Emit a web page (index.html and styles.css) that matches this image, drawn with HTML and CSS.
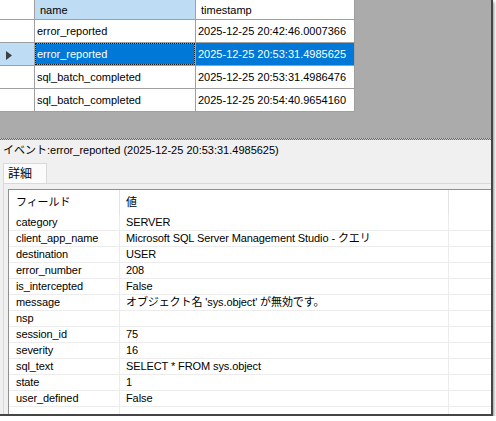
FILE: index.html
```html
<!DOCTYPE html>
<html lang="ja">
<head>
<meta charset="utf-8">
<title>Event viewer</title>
<link rel="stylesheet" href="styles.css">
</head>
<body>
<div class="frame">
  <div class="top">
    <div class="events">
      <div class="c corner"></div>
      <div class="c hd hd-sel">name</div>
      <div class="c hd">timestamp</div>

      <div class="c rh"></div>
      <div class="c">error_reported</div>
      <div class="c">2025-12-25 20:42:46.0007366</div>

      <div class="c rh rh-cur"><svg class="arrow" width="6" height="9" viewBox="0 0 6 9"><path d="M0 0L6 4.5L0 9Z" fill="#3f3f3f"/></svg></div>
      <div class="c sel focus">error_reported</div>
      <div class="c sel">2025-12-25 20:53:31.4985625</div>

      <div class="c rh"></div>
      <div class="c">sql_batch_completed</div>
      <div class="c">2025-12-25 20:53:31.4986476</div>

      <div class="c rh"></div>
      <div class="c">sql_batch_completed</div>
      <div class="c">2025-12-25 20:54:40.9654160</div>
    </div>
  </div>
  <div class="splitter"></div>
  <div class="details">
    <div class="title">イベント:error_reported (2025-12-25 20:53:31.4985625)</div>
    <div class="tabstrip"><div class="tab">詳細</div></div>
    <div class="tabpage">
      <div class="props">
        <div class="pc ph">フィールド</div><div class="pc ph">値</div><div class="pc ph"></div>
        <div class="pc">category</div><div class="pc">SERVER</div><div class="pc"></div>
        <div class="pc">client_app_name</div><div class="pc">Microsoft SQL Server Management Studio - クエリ</div><div class="pc"></div>
        <div class="pc">destination</div><div class="pc">USER</div><div class="pc"></div>
        <div class="pc">error_number</div><div class="pc">208</div><div class="pc"></div>
        <div class="pc">is_intercepted</div><div class="pc">False</div><div class="pc"></div>
        <div class="pc">message</div><div class="pc">オブジェクト名 'sys.object' が無効です。</div><div class="pc"></div>
        <div class="pc">nsp</div><div class="pc"></div><div class="pc"></div>
        <div class="pc">session_id</div><div class="pc">75</div><div class="pc"></div>
        <div class="pc">severity</div><div class="pc">16</div><div class="pc"></div>
        <div class="pc">sql_text</div><div class="pc">SELECT * FROM sys.object</div><div class="pc"></div>
        <div class="pc">state</div><div class="pc">1</div><div class="pc"></div>
        <div class="pc">user_defined</div><div class="pc">False</div><div class="pc"></div>
        <div class="pc"></div><div class="pc"></div><div class="pc"></div>
      </div>
    </div>
  </div>
</div>
</body>
</html>
```
FILE: styles.css
```css
html, body {
  margin: 0;
  padding: 0;
  background: #ffffff;
}
body {
  font-family: "Liberation Sans", "Noto Sans CJK JP", sans-serif;
  font-size: 11px;
  color: #000;
}
.frame {
  width: 491px;
  height: 414px;
  border-right: 2px solid #454545;
  border-bottom: 2px solid #454545;
  box-shadow: 1px 2px 3px rgba(0, 0, 0, 0.45);
  overflow: hidden;
  display: flex;
  flex-direction: column;
}
.top {
  height: 138px;
  background: #ababab;
  flex: none;
}
.events {
  display: grid;
  grid-template-columns: 34px 160px 158px;
  grid-template-rows: 19px repeat(4, 22px);
  gap: 1px;
  padding: 0 1px 1px 0;
  background: #a0a0a0;
  width: max-content;
}
.c {
  background: #fff;
  display: flex;
  align-items: center;
  padding-left: 2px;
  white-space: nowrap;
  overflow: hidden;
  box-sizing: border-box;
}
.hd {
  padding-left: 5px;
}
.hd-sel {
  background: #bedcf3;
}
.rh-cur {
  background: #bedcf3;
}
.arrow {
  margin-left: 4px;
  margin-top: 2px;
}
.sel {
  background: #0078d7;
  color: #fff;
}
.focus {
  box-shadow: inset 0 0 0 1px #d98a2b;
  outline: 1px dotted #1a1a1a;
  outline-offset: -1px;
}
.splitter {
  height: 2px;
  flex: none;
  background: conic-gradient(#6a6a6a 25%, #c4c4c4 0 50%, #6a6a6a 0 75%, #c4c4c4 0) 0 0 / 2px 2px;
}
.details {
  flex: 1;
  background: #f0f0f0;
  display: flex;
  flex-direction: column;
}
.title {
  height: 21px;
  line-height: 21px;
  padding-left: 3px;
  white-space: nowrap;
}
.tabstrip {
  margin-top: 2px;
  padding-left: 3px;
  display: flex;
}
.tab {
  width: 44px;
  height: 20px;
  box-sizing: border-box;
  border: 1px solid #d9d9d9;
  border-bottom: none;
  background: #fbfbfb;
  padding-left: 4px;
  line-height: 20px;
  font-size: 12px;
}
.tabpage {
  flex: 1;
  margin-left: 3px;
  border-top: 1px solid #d9d9d9;
  border-left: 1px solid #d9d9d9;
  padding: 5px 0 0 4px;
}
.props {
  width: 490px;
  border: 1px solid #8e8f8f;
  background: #fff;
  display: grid;
  grid-template-columns: 111px 329px 1fr;
  grid-template-rows: 25px;
  grid-auto-rows: 16px;
  letter-spacing: -0.1px;
}
.pc {
  box-sizing: border-box;
  border-right: 1px solid #ececec;
  border-bottom: 1px solid #ececec;
  padding-left: 6px;
  line-height: 15px;
  white-space: nowrap;
  overflow: hidden;
}
.pc:nth-child(3n+1) {
  padding-left: 7px;
}
.ph {
  border-bottom: none;
  line-height: 25px;
  border-right-color: #e3e3e3;
}
```
